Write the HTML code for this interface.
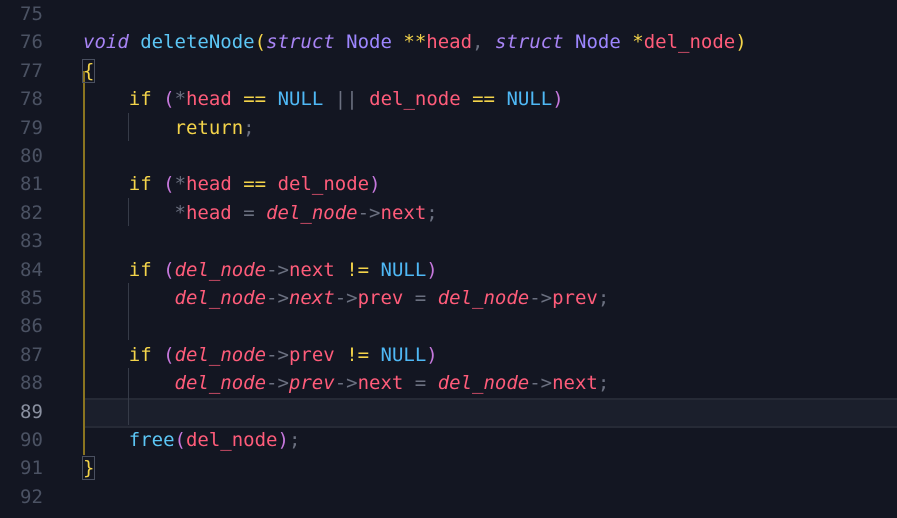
<!DOCTYPE html>
<html><head><style>
body{margin:0;width:897px;height:518px;background:#131622;overflow:hidden;font-family:"DejaVu Sans Mono","Liberation Mono",monospace;font-size:19px;}
.l{position:absolute;left:0;height:28.4px;line-height:28.4px;white-space:pre;}
.n{position:absolute;left:20px;width:40px;color:#4b5263;text-align:left}
.c{position:absolute;left:83px;color:#e6e6e6}
.k{color:#a884f5;font-style:italic}.f{color:#5cc6f5}.t{color:#9d86ff}.y{color:#f4d44a}
.r{color:#ff5c7a}.ri{color:#ff5c7a;font-style:italic}.b{color:#4fb8f5}.g{color:#6b7080}.p{color:#c678dd}
.hl{position:absolute;left:83px;right:0;top:398px;height:26px;background:#1b1f2c;border-top:2px solid #262a36;border-bottom:2px solid #262a36}
.gy{position:absolute;left:83px;width:2px;background:#8a7420}
.gg{position:absolute;left:128px;width:1px;background:#363b48}
.br{outline:1px solid #4a5060;}
</style></head><body>
<div class="hl"></div>
<div class="gy" style="top:71px;height:384px"></div>
<div class="gg" style="top:113px;height:28px"></div>
<div class="gg" style="top:198px;height:28px"></div>
<div class="gg" style="top:283px;height:57px"></div>
<div class="gg" style="top:368px;height:57px"></div>
<div class="l" style="top:0px"><span class="n">75</span></div>
<div class="l" style="top:28.4px"><span class="n">76</span><span class="c"><span class="k">void</span> <span class="f">deleteNode</span><span class="y">(</span><span class="k">struct</span> <span class="t">Node</span> <span class="y">**</span><span class="r">head</span><span class="g">,</span> <span class="k">struct</span> <span class="t">Node</span> <span class="y">*</span><span class="r">del_node</span><span class="y">)</span></span></div>
<div class="l" style="top:56.8px"><span class="n">77</span><span class="c"><span class="y br">{</span></span></div>
<div class="l" style="top:85.2px"><span class="n">78</span><span class="c">    <span class="y">if</span> <span class="p">(</span><span class="g">*</span><span class="r">head</span> <span class="y">==</span> <span class="b">NULL</span> <span class="g">||</span> <span class="r">del_node</span> <span class="y">==</span> <span class="b">NULL</span><span class="p">)</span></span></div>
<div class="l" style="top:113.6px"><span class="n">79</span><span class="c">        <span class="y">return</span><span class="g">;</span></span></div>
<div class="l" style="top:142px"><span class="n">80</span></div>
<div class="l" style="top:170.4px"><span class="n">81</span><span class="c">    <span class="y">if</span> <span class="p">(</span><span class="g">*</span><span class="r">head</span> <span class="y">==</span> <span class="r">del_node</span><span class="p">)</span></span></div>
<div class="l" style="top:198.8px"><span class="n">82</span><span class="c">        <span class="g">*</span><span class="r">head</span> <span class="g">=</span> <span class="ri">del_node</span><span class="g">-&gt;</span><span class="r">next</span><span class="g">;</span></span></div>
<div class="l" style="top:227.2px"><span class="n">83</span></div>
<div class="l" style="top:255.6px"><span class="n">84</span><span class="c">    <span class="y">if</span> <span class="p">(</span><span class="ri">del_node</span><span class="g">-&gt;</span><span class="r">next</span> <span class="y">!=</span> <span class="b">NULL</span><span class="p">)</span></span></div>
<div class="l" style="top:284px"><span class="n">85</span><span class="c">        <span class="ri">del_node</span><span class="g">-&gt;</span><span class="ri">next</span><span class="g">-&gt;</span><span class="r">prev</span> <span class="g">=</span> <span class="ri">del_node</span><span class="g">-&gt;</span><span class="r">prev</span><span class="g">;</span></span></div>
<div class="l" style="top:312.4px"><span class="n">86</span></div>
<div class="l" style="top:340.8px"><span class="n">87</span><span class="c">    <span class="y">if</span> <span class="p">(</span><span class="ri">del_node</span><span class="g">-&gt;</span><span class="r">prev</span> <span class="y">!=</span> <span class="b">NULL</span><span class="p">)</span></span></div>
<div class="l" style="top:369.2px"><span class="n">88</span><span class="c">        <span class="ri">del_node</span><span class="g">-&gt;</span><span class="ri">prev</span><span class="g">-&gt;</span><span class="r">next</span> <span class="g">=</span> <span class="ri">del_node</span><span class="g">-&gt;</span><span class="r">next</span><span class="g">;</span></span></div>
<div class="l" style="top:397.6px"><span class="n" style="color:#8a90a0">89</span></div>
<div class="l" style="top:426px"><span class="n">90</span><span class="c">    <span class="f">free</span><span class="p">(</span><span class="r">del_node</span><span class="p">)</span><span class="g">;</span></span></div>
<div class="l" style="top:454.4px"><span class="n">91</span><span class="c"><span class="y br">}</span></span></div>
<div class="l" style="top:482.8px"><span class="n">92</span></div>
</body></html>
